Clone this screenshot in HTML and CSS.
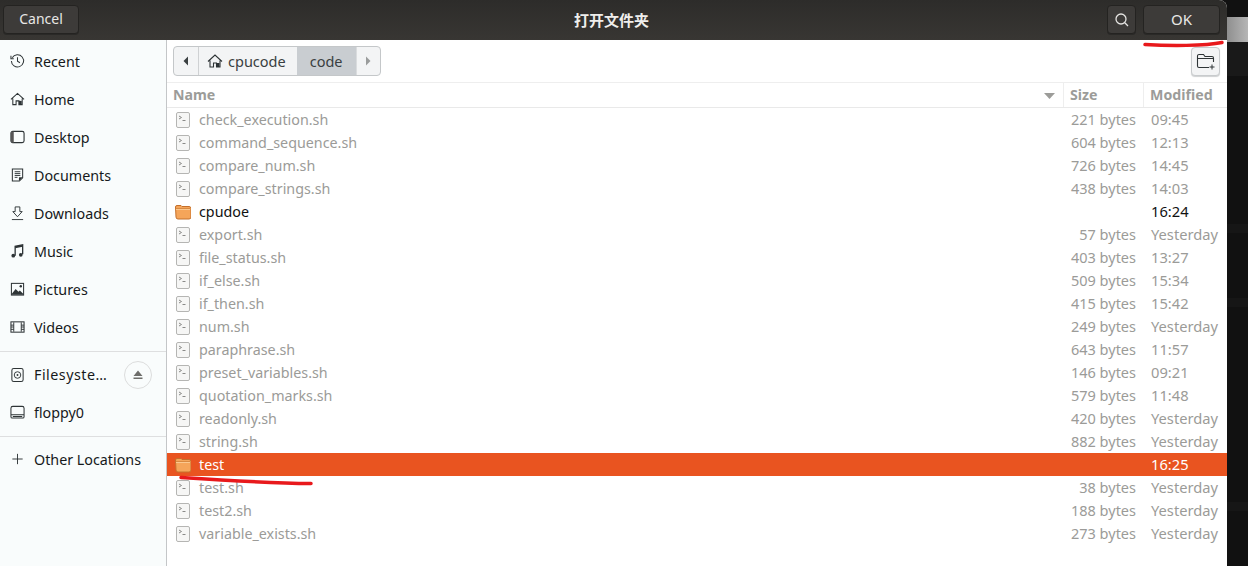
FILE: index.html
```html
<!DOCTYPE html>
<html lang="zh">
<head>
<meta charset="utf-8">
<title>打开文件夹</title>
<link rel="stylesheet" href="styles.css">
</head>
<body>
<svg width="0" height="0" class="defs">
  <symbol id="sh" viewBox="0 0 16 16"><rect x="1.5" y="0.5" width="13" height="15" rx="1.5" fill="#f6f6f5" stroke="#b5b5b3"/><path d="M4 4l2.5 1.5L4 7M7.5 8.5h3" fill="none" stroke="#8a8a88" stroke-width="1"/></symbol>
  <symbol id="folder" viewBox="0 0 16 16"><path d="M0.5 3a1.5 1.5 0 0 1 1.500-1.500h4l1 1h7a2 2 0 0 1 2 2v8.500a2 2 0 0 1-2 2h-11a2 2 0 0 1-2-2z" fill="#f5a55a" stroke="#c4702c"/><path d="M1 4.500h14" stroke="#d98a42" stroke-width="1"/><path d="M1 5.500h14" stroke="#fbc88f" stroke-width="1"/></symbol>
</svg>
<div class="desk">
  <main class="dialog">
    <header class="titlebar">
      <button class="hbtn cancel">Cancel</button>
      <h1 class="title">打开文件夹</h1>
      <div class="hright">
        <button class="hbtn search" aria-label="Search"><svg width="16" height="16" viewBox="0 0 16 16"><circle cx="7" cy="7" r="5" fill="none" stroke="#e4e3e1" stroke-width="1.3"/><path d="M10.8 10.8L14 14" stroke="#e4e3e1" stroke-width="1.3"/></svg></button>
        <button class="hbtn ok">OK</button>
      </div>
    </header>
    <div class="body">
      <nav class="sidebar">
        <ul class="places">
          <li class="place"><svg class="pi" viewBox="0 0 16 16"><path d="M2.4 4.6A6.5 6.5 0 1 1 1.5 8M1 2.5v3h3M8 4v4.3l2.6 1.6" fill="none" stroke="#2e3436" stroke-width="1.1"/></svg>Recent</li>
          <li class="place"><svg class="pi" viewBox="0 0 16 16"><path d="M1 8.5L8 2l7 6.500M3 7.500V14h3.500v-4h3v4H13V7.500" fill="none" stroke="#2e3436" stroke-width="1.1"/><rect x="9.500" y="10" width="3" height="4" fill="#2e3436"/></svg>Home</li>
          <li class="place"><svg class="pi" viewBox="0 0 16 16"><rect x="1" y="2" width="14" height="12" rx="2" fill="none" stroke="#2e3436" stroke-width="1.2"/><path d="M1 4a2 2 0 0 1 2-2h1v12H3a2 2 0 0 1-2-2z" fill="#555"/></svg>Desktop</li>
          <li class="place"><svg class="pi" viewBox="0 0 16 16"><path d="M2.500 1.500h11v9.500l-3.500 3.500H2.500z" fill="none" stroke="#2e3436" stroke-width="1.1"/><path d="M5 4.500h6M5 6.500h6M5 8.500h6M5 10.500h3" stroke="#2e3436"/><path d="M9.500 14.500v-4h4z" fill="#2e3436"/></svg>Documents</li>
          <li class="place"><svg class="pi" viewBox="0 0 16 16"><path d="M5.500 1.500h5v5h2.500L8 12 3 6.500h2.500zM2 15h12" fill="none" stroke="#2e3436" stroke-width="1"/></svg>Downloads</li>
          <li class="place"><svg class="pi" viewBox="0 0 16 16"><path d="M5.500 13V3l8-1.500V11.500" fill="none" stroke="#2e3436" stroke-width="1.400"/><path d="M5.500 3l8-1.500v2l-8 1.500z" fill="#2e3436"/><circle cx="3.500" cy="13" r="2" fill="#2e3436"/><circle cx="11.500" cy="12" r="2" fill="#2e3436"/></svg>Music</li>
          <li class="place"><svg class="pi" viewBox="0 0 16 16"><rect x="1.500" y="2" width="13" height="12.500" fill="none" stroke="#2e3436" stroke-width="1.100"/><path d="M2 13l4-5 3 3 1.500-1.500L14 13v1H2z" fill="#2e3436"/><circle cx="11.500" cy="5" r="1.300" fill="#2e3436"/></svg>Pictures</li>
          <li class="place"><svg class="pi" viewBox="0 0 16 16"><rect x="1" y="2.500" width="14" height="11" fill="none" stroke="#2e3436" stroke-width="1.100"/><path d="M4 3v10M12 3v10M1 6h3M1 8h3M1 10.500h3M12 6h3M12 8h3M12 10.500h3" stroke="#2e3436"/></svg>Videos</li>
        </ul>
        <ul class="places devices">
          <li class="place"><svg class="pi" viewBox="0 0 16 16"><rect x="2" y="1" width="12" height="14" rx="2" fill="none" stroke="#2e3436" stroke-width="1.100"/><circle cx="8" cy="8" r="3.500" fill="none" stroke="#2e3436"/><circle cx="8" cy="8" r="1" fill="#2e3436"/></svg><span class="plabel">Filesyste…</span><span class="eject"><svg width="12" height="12" viewBox="0 0 12 12"><path d="M6 1.500l4.500 5.500h-9zM1.500 8.500h9V10h-9z" fill="#6e6e6b"/></svg></span></li>
          <li class="place"><svg class="pi" viewBox="0 0 16 16"><path d="M1 11V4a2 2 0 0 1 2-2h10a2 2 0 0 1 2 2v7M1 11v2a1.500 1.500 0 0 0 1.500 1.500h11A1.500 1.500 0 0 0 15 13v-2zM3 12.800h10" fill="none" stroke="#2e3436" stroke-width="1.100"/></svg>floppy0</li>
        </ul>
        <ul class="places other">
          <li class="place"><svg class="pi" viewBox="0 0 16 16"><path d="M8 2.500v11M2.500 8h11" stroke="#2e3436" stroke-width="1"/></svg>Other Locations</li>
        </ul>
      </nav>
      <section class="content">
        <div class="toolbar">
          <div class="pathbar">
            <span class="arrow"><svg width="8" height="10" viewBox="0 0 8 10"><path d="M6 0.500v9L1.500 5z" fill="#3a3f41"/></svg></span>
            <span class="crumb"><svg class="crumb-i" viewBox="0 0 16 16"><path d="M1 8.500L8 2l7 6.500M3 7.500V14h3.500v-4h3v4H13V7.500" fill="none" stroke="#2e3436" stroke-width="1.100"/><rect x="9.500" y="10" width="3" height="4" fill="#2e3436"/></svg>cpucode</span>
            <span class="crumb current">code</span>
            <span class="arrow end"><svg width="8" height="10" viewBox="0 0 8 10"><path d="M2 0.500v9L6.500 5z" fill="#9a9c9c"/></svg></span>
          </div>
          <button class="newfolder" aria-label="New folder"><svg width="20" height="18" viewBox="0 0 20 18"><path d="M1.500 3a1.500 1.500 0 0 1 1.500-1.500h4.500L9 3.500h7a1.500 1.500 0 0 1 1.500 1.500v4M1.500 3v10a1.500 1.500 0 0 0 1.500 1.500h10M1.500 5.500h16" fill="none" stroke="#2e3436" stroke-width="1.100"/><path d="M16 11.500v5M13.500 14h5" stroke="#2e3436"/></svg></button>
        </div>
        <div class="table">
          <div class="thead">
            <div class="th name">Name<svg class="sort" width="11" height="6" viewBox="0 0 11 6"><path d="M0 0h11L5.500 6z" fill="#9c9c99"/></svg></div>
            <div class="th size">Size</div>
            <div class="th mod">Modified</div>
          </div>
          <div class="row"><svg class="fi"><use href="#sh"/></svg><span class="n">check_execution.sh</span><span class="s">221 bytes</span><span class="m">09:45</span></div>
          <div class="row"><svg class="fi"><use href="#sh"/></svg><span class="n">command_sequence.sh</span><span class="s">604 bytes</span><span class="m">12:13</span></div>
          <div class="row"><svg class="fi"><use href="#sh"/></svg><span class="n">compare_num.sh</span><span class="s">726 bytes</span><span class="m">14:45</span></div>
          <div class="row"><svg class="fi"><use href="#sh"/></svg><span class="n">compare_strings.sh</span><span class="s">438 bytes</span><span class="m">14:03</span></div>
          <div class="row dir"><svg class="fi"><use href="#folder"/></svg><span class="n">cpudoe</span><span class="s"></span><span class="m">16:24</span></div>
          <div class="row"><svg class="fi"><use href="#sh"/></svg><span class="n">export.sh</span><span class="s">57 bytes</span><span class="m">Yesterday</span></div>
          <div class="row"><svg class="fi"><use href="#sh"/></svg><span class="n">file_status.sh</span><span class="s">403 bytes</span><span class="m">13:27</span></div>
          <div class="row"><svg class="fi"><use href="#sh"/></svg><span class="n">if_else.sh</span><span class="s">509 bytes</span><span class="m">15:34</span></div>
          <div class="row"><svg class="fi"><use href="#sh"/></svg><span class="n">if_then.sh</span><span class="s">415 bytes</span><span class="m">15:42</span></div>
          <div class="row"><svg class="fi"><use href="#sh"/></svg><span class="n">num.sh</span><span class="s">249 bytes</span><span class="m">Yesterday</span></div>
          <div class="row"><svg class="fi"><use href="#sh"/></svg><span class="n">paraphrase.sh</span><span class="s">643 bytes</span><span class="m">11:57</span></div>
          <div class="row"><svg class="fi"><use href="#sh"/></svg><span class="n">preset_variables.sh</span><span class="s">146 bytes</span><span class="m">09:21</span></div>
          <div class="row"><svg class="fi"><use href="#sh"/></svg><span class="n">quotation_marks.sh</span><span class="s">579 bytes</span><span class="m">11:48</span></div>
          <div class="row"><svg class="fi"><use href="#sh"/></svg><span class="n">readonly.sh</span><span class="s">420 bytes</span><span class="m">Yesterday</span></div>
          <div class="row"><svg class="fi"><use href="#sh"/></svg><span class="n">string.sh</span><span class="s">882 bytes</span><span class="m">Yesterday</span></div>
          <div class="row sel"><svg class="fi"><use href="#folder"/></svg><span class="n">test</span><span class="s"></span><span class="m">16:25</span></div>
          <div class="row"><svg class="fi"><use href="#sh"/></svg><span class="n">test.sh</span><span class="s">38 bytes</span><span class="m">Yesterday</span></div>
          <div class="row"><svg class="fi"><use href="#sh"/></svg><span class="n">test2.sh</span><span class="s">188 bytes</span><span class="m">Yesterday</span></div>
          <div class="row"><svg class="fi"><use href="#sh"/></svg><span class="n">variable_exists.sh</span><span class="s">273 bytes</span><span class="m">Yesterday</span></div>
        </div>
      </section>
    </div>
  </main>
  <aside class="behind">
    <div class="b1"></div>
    <div class="b2"></div>
    <div class="b3"></div>
    <div class="b3 b4"></div>
    <div class="b3 b5"></div>
  </aside>
</div>
<svg class="marks" width="1248" height="566" viewBox="0 0 1248 566">
  <path d="M1145 44.500C1170 46 1205 46 1222 42.500" fill="none" stroke="#e8191c" stroke-width="3.500" stroke-linecap="round"/>
  <path d="M181 477.500C220 480 270 483 311 483.500" fill="none" stroke="#e8191c" stroke-width="3.500" stroke-linecap="round"/>
</svg>
</body>
</html>
```
FILE: styles.css
```css
* { box-sizing: border-box; }
html, body { margin: 0; height: 100%; overflow: hidden; }
body { background: #111; font-family: "Noto Sans", "Noto Sans CJK SC", sans-serif; font-size: 14px; }
.defs { position: absolute; }
.desk { display: flex; height: 566px; }
.dialog { width: 1227px; height: 566px; display: flex; flex-direction: column; background: #fff; border-top-right-radius: 8px; overflow: hidden; flex: none; }
.titlebar { height: 40px; flex: none; display: flex; align-items: center; justify-content: space-between; padding: 0 7px 0 3px; position: relative; background: linear-gradient(#2d2c2a, #383633); color: #f0efed; }
.hbtn { height: 29px; border: 1px solid #242321; border-radius: 4px; background: #3d3b39; color: #e8e7e5; font: inherit; font-size: 14px; padding: 0 0 2px; box-shadow: 0 1px 0 #2a2927; margin-top: -1px; }
.cancel { width: 76px; }
.ok { width: 77px; font-size: 15px; }
.title { position: absolute; left: 0; right: 4px; top: 0; margin: 0; line-height: 39px; text-align: center; font-size: 15px; font-weight: 700; color: #efeeec; pointer-events: none; font-family: "Noto Sans CJK SC", sans-serif; }
.hright { display: flex; gap: 7px; }
.search { width: 29px; display: flex; align-items: center; justify-content: center; padding: 0; }
.body { flex: 1; display: flex; min-height: 0; }
.sidebar { width: 167px; flex: none; background: #f9fcfc; border-right: 1px solid #c4c6c8; color: #16191b; font-size: 14.300px; padding-top: 2px; }
.places { list-style: none; margin: 0; padding: 0; }
.place { height: 38px; display: flex; align-items: center; padding-left: 10px; gap: 9px; position: relative; white-space: nowrap; }
.pi { width: 15px; height: 16px; flex: none; }
.devices { border-top: 1px solid #dedfe0; margin-top: 5px; padding-top: 4px; }
.devices .place { height: 37.500px; }
.other { border-top: 1px solid #dedfe0; margin-top: 5px; padding-top: 3px; }
.plabel { flex: none; letter-spacing: 0.500px; }
.eject { position: absolute; right: 14px; top: 5px; width: 28px; height: 28px; border: 1px solid #dcdddd; border-radius: 50%; display: flex; align-items: center; justify-content: center; }
.content { flex: 1; min-width: 0; background: #fff; display: flex; flex-direction: column; }
.toolbar { height: 43px; flex: none; display: flex; justify-content: space-between; align-items: flex-start; padding: 6px 6px 0 6px; border-bottom: 1px solid #eeeeee; }
.pathbar { height: 30px; display: flex; border: 1px solid #c4c7c9; border-radius: 4px; background: #f3f4f5; color: #3a3f41; font-size: 14.500px; overflow: hidden; line-height: 26px; }
.arrow { width: 25px; display: flex; align-items: center; justify-content: center; }
.arrow:first-child { border-right: 1px solid #cfd1d3; }
.arrow.end { width: 24px; border-left: 1px solid #dadcde; }
.crumb { display: flex; align-items: center; padding: 0 11px 0 8px; gap: 5px; }
.crumb-i { width: 16px; height: 16px; }
.crumb.current { background: #c9cdd1; padding: 0 13px; }
.newfolder { width: 29px; height: 29px; margin: 1px 1px 0 0; border: 1px solid #c8cbcd; border-radius: 4px; background: #f3f4f5; display: flex; align-items: center; justify-content: center; padding: 0; box-shadow: 0 1px 1px #cfd1d2; }
.thead { display: grid; grid-template-columns: 1fr 80px 83px; height: 25px; border-bottom: 1px solid #e9e9e9; }
.th { color: #9c9c99; font-weight: 700; font-size: 14.200px; padding-left: 6px; line-height: 23px; border-right: 1px solid #eeeeee; position: relative; }
.th.mod { border-right: 0; }
.sort { position: absolute; right: 8px; top: 10px; }
.row { display: grid; grid-template-columns: 16px 1fr 80px 83px; height: 23px; align-items: center; padding-left: 8px; color: #9b9b98; white-space: nowrap; }
.fi { width: 16px; height: 16px; }
.n { padding: 0 0 1px 8px; font-size: 14.300px; }
.s { justify-self: end; padding: 0 8px 2px 0; font-size: 14.500px; }
.m { padding: 0 0 2px 7px; font-size: 14.700px; }
.dir { color: #111; }
.sel { background: #e95420; color: #fff; }
.behind { flex: 1; display: flex; flex-direction: column; background: #111; }
.b1 { height: 25px; margin-top: 17px; flex: none; background: linear-gradient(90deg, #8f8f8f, #b6b6b6); }
.b2 { height: 34px; flex: none; background: #191919; }
.b3 { height: 9px; flex: none; margin-top: 148px; background: #161616; }
.b4 { margin-top: 65px; }
.b5 { margin-top: 195px; }
.marks { position: absolute; left: 0; top: 0; pointer-events: none; }
```
